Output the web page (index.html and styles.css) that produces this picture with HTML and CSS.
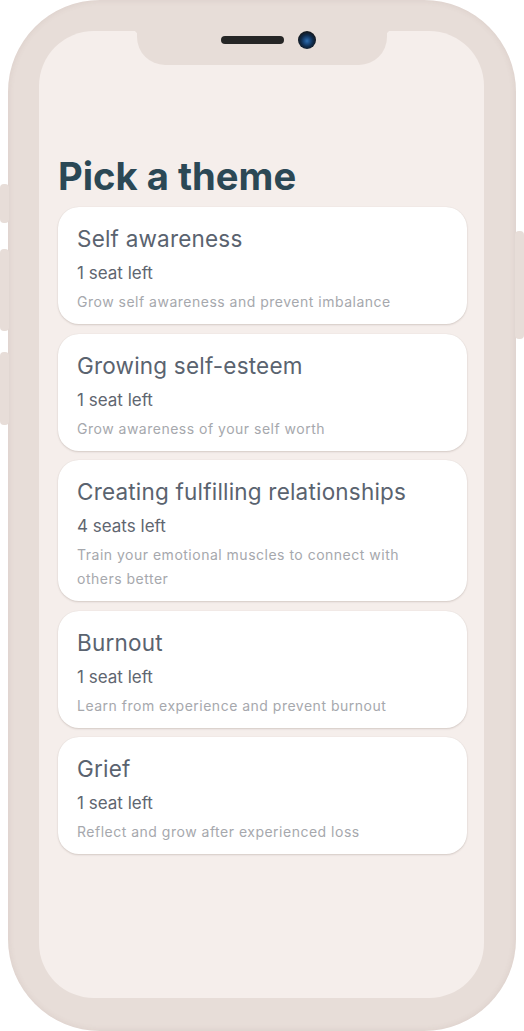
FILE: index.html
```html
<!DOCTYPE html>
<html lang="en">
<head>
<meta charset="utf-8">
<title>Pick a theme</title>
<link rel="stylesheet" href="styles.css">
</head>
<body>
<div class="stage">
  <div class="phone">
    <span class="btn btn-l1"></span>
    <span class="btn btn-l2"></span>
    <span class="btn btn-l3"></span>
    <span class="btn btn-r1"></span>
    <div class="screen">
      <div class="notch">
        <span class="speaker"></span>
        <span class="camera"></span>
      </div>
      <main class="content">
        <h1 class="title">Pick a theme</h1>
        <ul class="list">
          <li class="card">
            <h2 class="card-title">Self awareness</h2>
            <p class="seats">1 seat left</p>
            <p class="desc">Grow self awareness and prevent imbalance</p>
          </li>
          <li class="card">
            <h2 class="card-title">Growing self-esteem</h2>
            <p class="seats">1 seat left</p>
            <p class="desc">Grow awareness of your self worth</p>
          </li>
          <li class="card">
            <h2 class="card-title">Creating fulfilling relationships</h2>
            <p class="seats">4 seats left</p>
            <p class="desc">Train your emotional muscles to connect with others better</p>
          </li>
          <li class="card">
            <h2 class="card-title">Burnout</h2>
            <p class="seats">1 seat left</p>
            <p class="desc">Learn from experience and prevent burnout</p>
          </li>
          <li class="card">
            <h2 class="card-title">Grief</h2>
            <p class="seats">1 seat left</p>
            <p class="desc">Reflect and grow after experienced loss</p>
          </li>
        </ul>
      </main>
    </div>
  </div>
</div>
</body>
</html>
```
FILE: styles.css
```css
* { box-sizing: border-box; }
html, body { margin: 0; padding: 0; background: #ffffff; }
body { font-family: Inter, "Noto Sans", sans-serif; }

.stage {
  width: 524px;
  height: 1031px;
  padding-left: 8px;
}

.phone {
  position: relative;
  width: 508px;
  height: 1031px;
  border-radius: 92px;
  background: #e7ddd8;
  padding: 31px 32px 33px 31px;
  box-shadow: inset 0 0 6px rgba(120, 90, 80, 0.12);
}

.btn {
  position: absolute;
  width: 9px;
  background: #e7ddd8;
  border-radius: 4px;
}
.btn-l1 { left: -8px; top: 184px; height: 39px; }
.btn-l2 { left: -8px; top: 249px; height: 82px; }
.btn-l3 { left: -8px; top: 352px; height: 73px; }
.btn-r1 { right: -8px; top: 231px; height: 108px; }

.screen {
  position: relative;
  height: 100%;
  border-radius: 55px;
  background: #f5eeeb;
  overflow: hidden;
}

.notch {
  position: absolute;
  top: 0;
  left: 98px;
  width: 250px;
  height: 34px;
  background: #e7ddd8;
  border-radius: 0 0 28px 28px;
}
.notch::before,
.notch::after {
  content: "";
  position: absolute;
  top: 0;
  width: 4px;
  height: 4px;
}
.notch::before {
  left: -4px;
  background: radial-gradient(circle at 0 100%, transparent 4px, #e7ddd8 4.5px);
}
.notch::after {
  right: -4px;
  background: radial-gradient(circle at 100% 100%, transparent 4px, #e7ddd8 4.5px);
}

.speaker {
  position: absolute;
  left: 84px;
  top: 5px;
  width: 63px;
  height: 8px;
  border-radius: 4px;
  background: #262626;
}
.camera {
  position: absolute;
  left: 161px;
  top: 0;
  width: 18px;
  height: 18px;
  border-radius: 50%;
  background: radial-gradient(circle at 50% 55%, #2f6fb0 0, #1b4a80 3px, #0f2a4a 6px, #141a22 9px);
}

.content {
  padding: 123px 17px 0 19px;
}

.title {
  margin: 0 0 9px;
  font-family: Inter, sans-serif;
  font-weight: 700;
  font-size: 38.2px;
  line-height: 44px;
  letter-spacing: 0;
  color: #2b4855;
}

.list {
  list-style: none;
  margin: 0;
  padding: 0;
  display: flex;
  flex-direction: column;
  gap: 9.5px;
}

.card {
  background: #ffffff;
  border-radius: 21px;
  padding: 18px 30px 10px 19px;
  box-shadow: 0 1px 2px rgba(90, 70, 60, 0.2), 0 0 1px rgba(90, 70, 60, 0.12);
}

.card-title {
  margin: 0;
  font-weight: 400;
  font-size: 22.5px;
  line-height: 28px;
  letter-spacing: 0.2px;
  color: #5a636f;
}

.seats {
  margin: 8px 0 0;
  font-size: 17px;
  line-height: 24px;
  color: #5f6670;
}

.desc {
  margin: 5px 0 0;
  font-size: 14px;
  line-height: 24px;
  letter-spacing: 0.5px;
  color: #a6a8ad;
}
```
